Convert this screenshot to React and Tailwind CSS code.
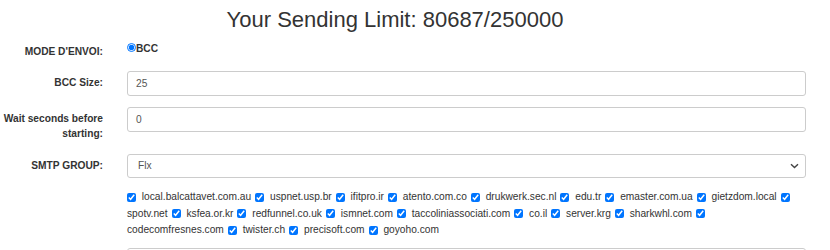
import React, { Fragment } from "react";

const domains = [
  "local.balcattavet.com.au",
  "uspnet.usp.br",
  "ifitpro.ir",
  "atento.com.co",
  "drukwerk.sec.nl",
  "edu.tr",
  "emaster.com.ua",
  "gietzdom.local",
  "spotv.net",
  "ksfea.or.kr",
  "redfunnel.co.uk",
  "ismnet.com",
  "taccoliniassociati.com",
  "co.il",
  "server.krg",
  "sharkwhl.com",
  "codecomfresnes.com",
  "twister.ch",
  "precisoft.com",
  "goyoho.com",
];

function Cb({ first }) {
  return (
    <input
      type="checkbox"
      defaultChecked
      className={
        "w-[9px] h-[9px] align-middle mr-[3px] " + (first ? "ml-0" : "ml-[4px]")
      }
    />
  );
}

export default function App() {
  return (
    <div
      className="w-[830px] h-[250px] overflow-hidden bg-white text-[#333]"
      style={{ fontFamily: '"Liberation Sans", Arial, sans-serif' }}
    >
      <h2 className="mt-[8px] mb-[8px] pr-[40px] text-center text-[22px] leading-[24px] font-normal text-[#333]">
        Your Sending Limit: 80687/250000
      </h2>

      {/* Mode d'envoi */}
      <div className="flex h-[20px] mb-[11px]">
        <div className="w-[127px] shrink-0 pr-[24px] pt-[5px] text-right text-[10.2px] leading-[14.6px] font-bold">
          MODE D'ENVOI:
        </div>
        <div className="flex items-start">
          <input
            type="radio"
            name="mode"
            defaultChecked
            className="w-[9px] h-[9px] m-0 mt-[3px]"
          />
          <span className="pt-[2px] text-[10.2px] leading-[14.6px] font-bold">BCC</span>
        </div>
      </div>

      {/* BCC Size */}
      <div className="flex mb-[11px]">
        <div className="w-[127px] shrink-0 pr-[24px] pt-[5px] text-right text-[10.2px] leading-[14.6px] font-bold">
          BCC Size:
        </div>
        <div className="flex-1 mr-[24px] h-[25px] border border-[#ccc] rounded-[3px] pl-[8px] flex items-center text-[10.2px] text-[#555]">
          25
        </div>
      </div>

      {/* Wait seconds */}
      <div className="flex h-[36px] mb-[11px]">
        <div className="w-[127px] shrink-0 pr-[24px] pt-[4px] text-right text-[10.2px] leading-[15px] font-bold">
          Wait seconds before starting:
        </div>
        <div className="flex-1 mr-[24px] h-[25px] border border-[#ccc] rounded-[3px] pl-[8px] flex items-center text-[10.2px] text-[#555]">
          0
        </div>
      </div>

      {/* SMTP group */}
      <div className="flex mb-[11px]">
        <div className="w-[127px] shrink-0 pr-[24px] pt-[5px] text-right text-[10.2px] leading-[14.6px] font-bold">
          SMTP GROUP:
        </div>
        <div className="flex-1 mr-[24px] h-[24px] border border-[#ccc] rounded-[3px] pl-[10px] pr-[6px] flex items-center justify-between text-[10.2px] text-[#555]">
          <span>Flx</span>
          <svg width="9" height="6" viewBox="0 0 9 6" fill="none">
            <path d="M1 1.2 L4.5 4.6 L8 1.2" stroke="#444" strokeWidth="1.4" />
          </svg>
        </div>
      </div>

      {/* Domains */}
      <div className="flex mb-[9px]">
        <div className="w-[127px] shrink-0" />
        <div className="flex-1 mr-[24px] text-[10.2px] leading-[16.6px] text-[#333]">
          <Cb first />{" "}
          {domains.map((d, i) => (
            <Fragment key={d}>
              <span className="whitespace-nowrap">
                {d}
                {i < domains.length - 1 && <Cb />}
              </span>
              {i < domains.length - 1 ? " " : null}
            </Fragment>
          ))}
        </div>
      </div>

      <div className="flex">
        <div className="w-[127px] shrink-0" />
        <div className="flex-1 mr-[24px] h-[30px] border border-[#ccc] rounded-[3px]" />
      </div>
    </div>
  );
}
